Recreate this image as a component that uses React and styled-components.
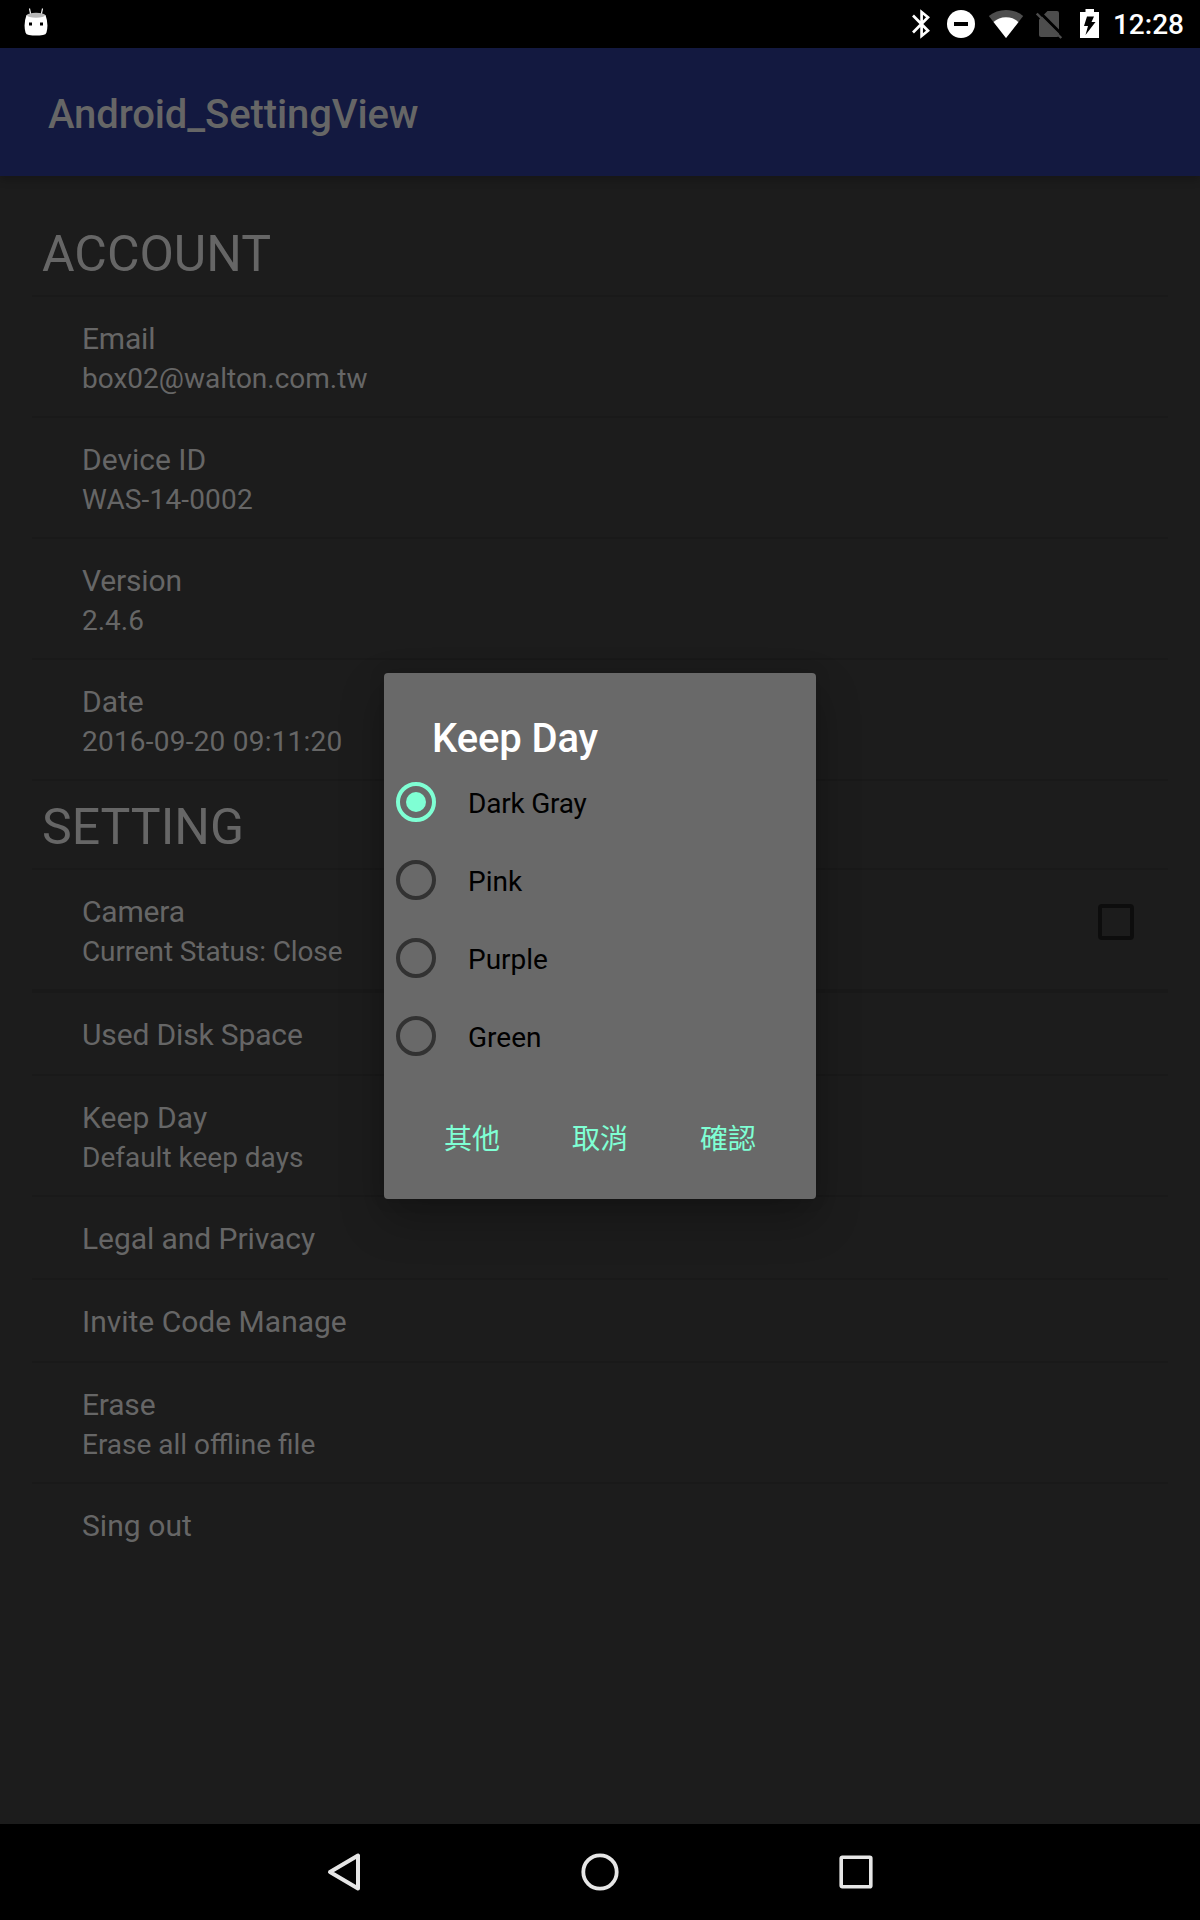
import React, { useState } from "react";
import styled, { createGlobalStyle, css } from "styled-components";

const GlobalStyle = createGlobalStyle`
  *, *::before, *::after { box-sizing: border-box; }
  body {
    margin: 0;
    background: #000;
    font-family: Roboto, "Noto Sans CJK TC", sans-serif;
  }
`;

const Screen = styled.div`
  position: relative;
  display: flex;
  flex-direction: column;
  width: 1200px;
  height: 1920px;
  background: #1c1c1c;
  overflow: hidden;
`;

const StatusBar = styled.header`
  flex: none;
  display: flex;
  align-items: center;
  height: 48px;
  padding: 0 16px 0 24px;
  background: #000;
`;

const StatusIcon = styled.svg`
  flex: none;
  display: block;
  height: 48px;
  margin-left: ${(p) => p.$gap || 0}px;
`;

const StatusTray = styled.div`
  display: flex;
  align-items: center;
  margin-left: auto;
`;

const Clock = styled.time`
  width: 72px;
  margin-left: 12px;
  padding-top: 2px;
  font-size: 28px;
  font-weight: 500;
  line-height: 46px;
  color: #fff;
  white-space: nowrap;
  text-align: right;
`;

const AppBar = styled.div`
  flex: none;
  display: flex;
  align-items: center;
  height: 128px;
  padding: 6px 48px 0;
  background: #131940;
  box-shadow: 0 4px 8px rgba(0, 0, 0, 0.22);
`;

const AppTitle = styled.h1`
  margin: 0;
  font-size: 40px;
  font-weight: 500;
  line-height: 54px;
  letter-spacing: -0.11px;
  color: #666;
`;

const Content = styled.main`
  flex: 1;
  display: flex;
  flex-direction: column;
  padding: 32px 32px 0;
`;

const rule = css`
  border-bottom: ${(p) => p.$rule ?? 2}px solid #191919;
`;

const SectionHeader = styled.h2`
  flex: none;
  height: 89px;
  margin: 0;
  padding: 13px 10px 0;
  font-size: 50px;
  font-weight: 400;
  line-height: 66px;
  color: #666;
  ${rule}
`;

const Row = styled.div`
  flex: none;
  box-sizing: content-box;
  display: flex;
  justify-content: space-between;
  align-items: flex-start;
  height: ${(p) => (p.$double ? 97 : 59)}px;
  padding: 22px 34px 0 50px;
  color: #666;
  ${rule}
`;

const RowText = styled.div`
  display: flex;
  flex-direction: column;
`;

const RowTitle = styled.span`
  font-size: 30px;
  line-height: 40px;
  letter-spacing: ${(p) => p.$tracking || 0}px;
`;

const RowDetail = styled.span`
  font-size: 28px;
  line-height: 40px;
  letter-spacing: ${(p) => p.$tracking || 0}px;
`;

const CheckBox = styled.span`
  width: 36px;
  height: 36px;
  margin-top: 12px;
  border: 4px solid #0d0d0d;
  border-radius: 4px;
`;

const NavBar = styled.nav`
  flex: none;
  display: flex;
  justify-content: center;
  align-items: center;
  height: 96px;
  background: #000;
`;

const NavButton = styled.button`
  display: flex;
  justify-content: center;
  align-items: center;
  width: 256px;
  height: 96px;
  padding: 0;
  border: 0;
  background: none;
`;

const Overlay = styled.div`
  position: absolute;
  inset: 48px 0 96px;
  display: flex;
  justify-content: center;
  align-items: center;
`;

const Dialog = styled.section`
  display: flex;
  flex-direction: column;
  width: 432px;
  height: 526px;
  padding-top: 40px;
  background: #696969;
  border-radius: 4px;
  box-shadow: 0 20px 44px rgba(0, 0, 0, 0.26), 0 0 16px rgba(0, 0, 0, 0.14);
`;

const DialogTitle = styled.h3`
  margin: 0;
  padding: 0 48px;
  height: 50px;
  font-size: 40px;
  font-weight: 500;
  line-height: 52px;
  letter-spacing: -0.12px;
  color: #fff;
`;

const Options = styled.div`
  display: flex;
  flex-direction: column;
`;

const Option = styled.label`
  display: flex;
  align-items: center;
  gap: 32px;
  height: 78px;
  padding-left: 12px;
  font-size: 28px;
  line-height: 38px;
  color: #000;
`;

const OptionLabel = styled.span`
  padding-top: 3px;
  letter-spacing: ${(p) => p.$tracking || 0}px;
`;

const Radio = styled.span`
  display: flex;
  justify-content: center;
  align-items: center;
  width: 40px;
  height: 40px;
  border: 4px solid ${(p) => (p.$on ? "#7fffd4" : "#323232")};
  border-radius: 50%;

  &::after {
    content: "";
    width: 20px;
    height: 20px;
    border-radius: 50%;
    background: ${(p) => (p.$on ? "#7fffd4" : "transparent")};
  }
`;

const Actions = styled.footer`
  display: flex;
  padding: 0 24px;
  margin-top: 14px;
`;

const Action = styled.button`
  width: 128px;
  height: 96px;
  padding: 0;
  border: 0;
  background: none;
  font-family: "Noto Sans CJK TC", sans-serif;
  font-size: 28px;
  color: #7fffd4;
`;

const account = [
  { title: "Email", detail: "box02@walton.com.tw", titleTracking: -0.2 },
  { title: "Device ID", detail: "WAS-14-0002", detailTracking: 0.16 },
  { title: "Version", detail: "2.4.6", titleTracking: -0.16 },
  { title: "Date", detail: "2016-09-20 09:11:20", detailTracking: 0.22 },
];

const settings = [
  { title: "Camera", detail: "Current Status: Close", check: true, rule: 4, titleTracking: -0.18, detailTracking: -0.12 },
  { title: "Used Disk Space", titleTracking: -0.15 },
  { title: "Keep Day", detail: "Default keep days", titleTracking: 0.1 },
  { title: "Legal and Privacy", titleTracking: -0.06 },
  { title: "Invite Code Manage" },
  { title: "Erase", detail: "Erase all offline file", titleTracking: -0.2 },
  { title: "Sing out", rule: 0, titleTracking: 0.06 },
];

const colors = [
  { name: "Dark Gray", tracking: -0.22 },
  { name: "Pink" },
  { name: "Purple" },
  { name: "Green" },
];

function SettingRow({ title, detail, check, rule: width, titleTracking, detailTracking }) {
  return (
    <Row $double={Boolean(detail)} $rule={width}>
      <RowText>
        <RowTitle $tracking={titleTracking}>{title}</RowTitle>
        {detail && <RowDetail $tracking={detailTracking}>{detail}</RowDetail>}
      </RowText>
      {check && <CheckBox />}
    </Row>
  );
}

function StatusIcons() {
  return (
    <>
      <StatusIcon width="20" viewBox="0 0 20 48" fill="none" stroke="#fff" strokeWidth="2.7">
        <path d="M1 15.500 L16 30.700 L9.600 36 V12 L16 17.300 L1 32.500" />
      </StatusIcon>
      <StatusIcon $gap={15} width="28" viewBox="0 0 28 48">
        <circle cx="14" cy="24" r="14" fill="#fff" />
        <path d="M7 22 H21 V26 H7 Z" fill="#000" />
      </StatusIcon>
      <StatusIcon $gap={13} width="36" viewBox="0 0 36 48">
        <path d="M18 38 L.8 16 C5.5 12 11.5 10 18 10 S30.500 12 35.200 16 Z" fill="#4d4d4d" />
        <path d="M18 38 L5.500 22 C9 19 13 17.300 18 17.300 S27 19 30.500 22 Z" fill="#fff" />
      </StatusIcon>
      <StatusIcon $gap={12} width="27" viewBox="0 0 27 48">
        <path d="M11.500 11 H21 Q23 11 23 13 V35 Q23 37 21 37 H5 Q3 37 3 35 V19.500 Z" fill="#4d4d4d" />
        <path d="M2.500 11 L27 35.500" stroke="#000" strokeWidth="3" />
        <path d="M.8 13.500 L25.300 38" stroke="#4d4d4d" strokeWidth="2.400" />
      </StatusIcon>
      <StatusIcon $gap={17} width="20" viewBox="0 0 20 48">
        <path d="M5.500 9 H14 V12 H19 V38 H0 V12 H5.500 Z" fill="#fff" />
        <path d="M7 16.500 H14 L11.500 22 H15.500 L5.500 35 L8 26 H4 Z" fill="#000" />
      </StatusIcon>
    </>
  );
}

export default function App() {
  const [selected, setSelected] = useState("Dark Gray");

  return (
    <>
      <GlobalStyle />
      <Screen>
        <StatusBar>
          <StatusIcon width="24" viewBox="0 0 24 48">
            <path d="M5.500 8.500 L6.800 15 M18.500 8.500 L17.200 15" stroke="#fff" strokeWidth="1.200" />
            <path d="M2.500 15 Q12 12 21.500 15 Q24.800 24 22.500 32.500 Q22 34.500 19 35 Q12 36 5 35 Q2 34.500 1.500 32.500 Q-.8 24 2.500 15 Z" fill="#fff" />
            <ellipse cx="12" cy="15.200" rx="9" ry="2.500" fill="#b8b8b8" />
            <path d="M5 22.500 h3 v3 h-3 Z M16 22.500 h3 v3 h-3 Z" fill="#000" />
          </StatusIcon>
          <StatusTray>
            <StatusIcons />
            <Clock>12:28</Clock>
          </StatusTray>
        </StatusBar>

        <AppBar>
          <AppTitle>Android_SettingView</AppTitle>
        </AppBar>

        <Content>
          <SectionHeader>ACCOUNT</SectionHeader>
          {account.map((item) => (
            <SettingRow key={item.title} {...item} />
          ))}
          <SectionHeader>SETTING</SectionHeader>
          {settings.map((item) => (
            <SettingRow key={item.title} {...item} />
          ))}
        </Content>

        <NavBar>
          <NavButton aria-label="Back">
            <svg width="36" height="40" viewBox="0 0 36 40" fill="none" stroke="#e6e6e6" strokeWidth="4" strokeLinejoin="round">
              <path d="M4 20 L32 3.500 V36.500 Z" />
            </svg>
          </NavButton>
          <NavButton aria-label="Home">
            <svg width="40" height="40" viewBox="0 0 40 40" fill="none" stroke="#e6e6e6" strokeWidth="3.800">
              <circle cx="20" cy="20" r="16.700" />
            </svg>
          </NavButton>
          <NavButton aria-label="Recent apps">
            <svg width="40" height="40" viewBox="0 0 40 40" fill="none" stroke="#e6e6e6" strokeWidth="3.600">
              <rect x="5.200" y="5.200" width="29.600" height="29.600" rx="1" />
            </svg>
          </NavButton>
        </NavBar>

        <Overlay>
          <Dialog>
            <DialogTitle>Keep Day</DialogTitle>
            <Options>
              {colors.map(({ name, tracking }) => (
                <Option key={name} onClick={() => setSelected(name)}>
                  <Radio $on={name === selected} />
                  <OptionLabel $tracking={tracking}>{name}</OptionLabel>
                </Option>
              ))}
            </Options>
            <Actions>
              <Action>其他</Action>
              <Action>取消</Action>
              <Action>確認</Action>
            </Actions>
          </Dialog>
        </Overlay>
      </Screen>
    </>
  );
}
